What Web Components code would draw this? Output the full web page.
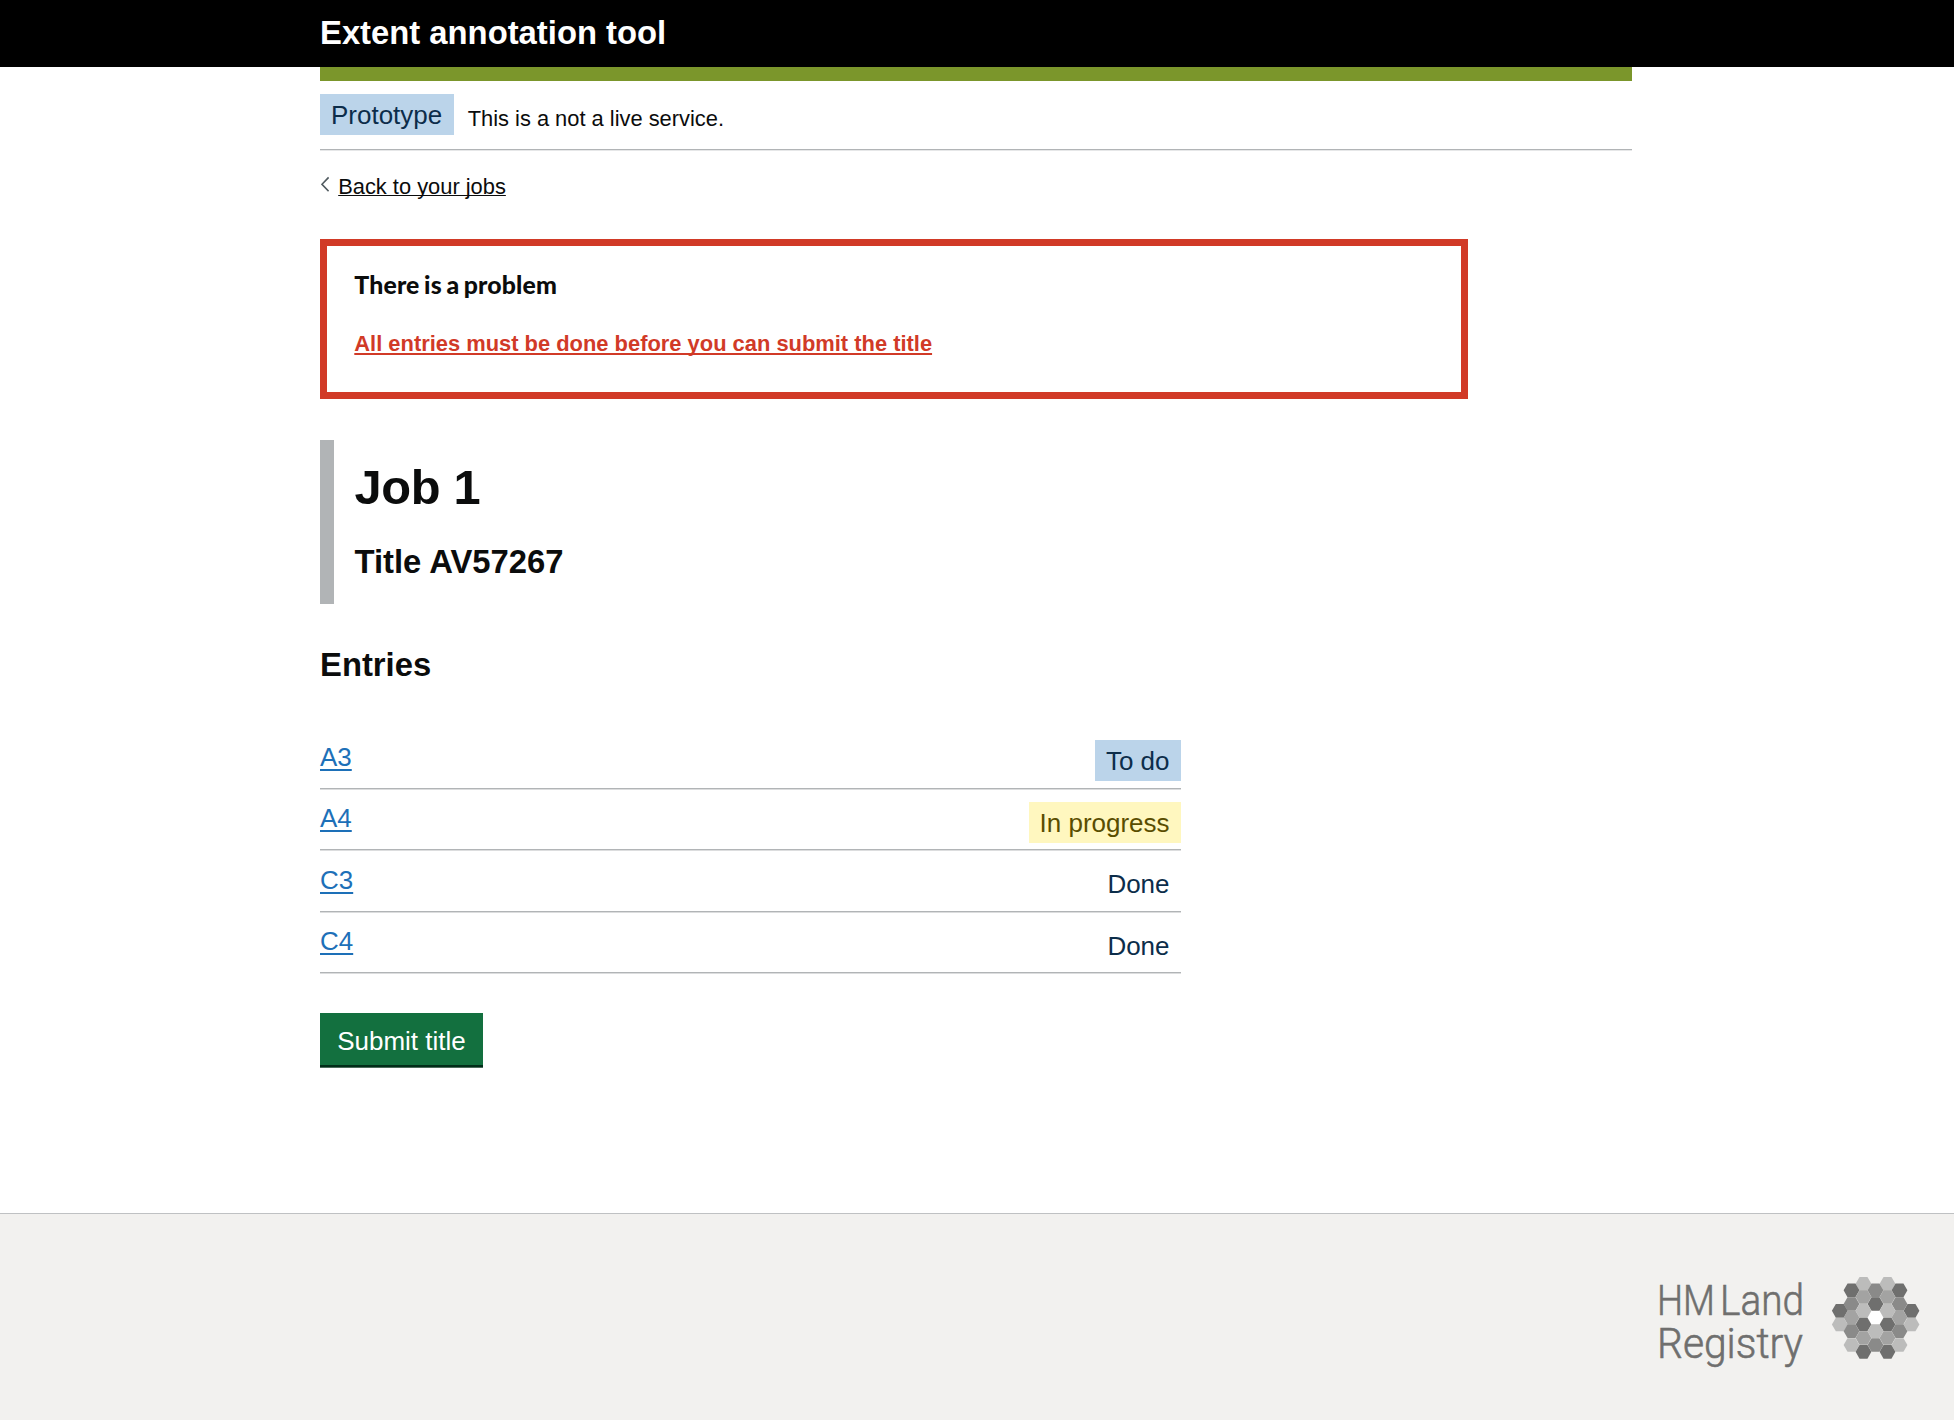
<!DOCTYPE html>
<html lang="en">
<head>
<meta charset="utf-8">
<title>Extent annotation tool</title>
<style>
html,body{margin:0;padding:0;background:#fff}
body{font-family:"Liberation Sans",Arial,sans-serif;color:#0b0c0c;-webkit-font-smoothing:antialiased}
</style>
</head>
<body>
<job-page></job-page>
<script>
function define(name, html){
  const t=document.createElement('template');
  t.innerHTML=html;
  customElements.define(name, class extends HTMLElement{
    constructor(){super();this.attachShadow({mode:'open'}).appendChild(t.content.cloneNode(true));}
  });
}

define('app-header', `<style>
:host{display:block;background:#000;height:67px;color:#fff}
div{padding-left:320px;padding-top:14px;font-size:32.8px;line-height:38px;font-weight:700}
</style><div><slot></slot></div>`);

define('status-tag', `<style>
:host{display:inline-block;box-sizing:border-box;height:41px;padding:0 11.5px 0 11px;font-size:25.97px;line-height:42px;background:#bbd4ea;color:#0c2d4a;white-space:nowrap}
:host([kind=progress]){background:#fff7bf;color:#594d00}
:host([kind=done]){background:transparent}
</style><slot></slot>`);

define('phase-banner', `<style>
:host{display:flex;box-sizing:border-box;height:69.5px;padding-top:13.5px;border-bottom:1px solid #b1b4b6;box-shadow:0 1px 0 #e6e7e8;align-items:flex-start;gap:14px}
span{font-size:21.87px;line-height:28px;padding-top:10.5px}
</style><status-tag>Prototype</status-tag><span><slot></slot></span>`);

define('back-link', `<style>
:host{display:flex;align-items:flex-start;margin-top:23px;height:28px}
svg{display:block;width:8px;height:16px;margin:3px 9.7px 0 .5px}
a{font-size:21.87px;line-height:28px;color:#0b0c0c;text-decoration:underline;text-decoration-thickness:1.4px;text-underline-offset:1.2px;text-decoration-skip-ink:none}
</style><svg viewBox="0 0 8 16"><path d="M7.6 1.4 1 8.3l6.6 6.9" fill="none" stroke="#505a5f" stroke-width="1.6"/></svg><a><slot></slot></a>`);

define('error-summary', `<style>
:host{display:block;box-sizing:border-box;width:1148px;height:160px;margin-top:38px;border:7px solid #d13a27;padding:23px 27.3px}
h2{margin:0;font:900 24.8px/32px Lato,sans-serif;letter-spacing:.16px;word-spacing:-1.5px}
a{display:block;width:max-content;margin-top:28.5px;font-size:21.9px;line-height:28px;font-weight:700;color:#d13a27;text-decoration:underline;text-decoration-thickness:1.5px;text-underline-offset:1.6px;text-decoration-skip-ink:none}
</style><h2><slot name="heading"></slot></h2><a><slot></slot></a>`);

define('job-title', `<style>
:host{display:block;box-sizing:border-box;height:164px;margin-top:41px;border-left:14px solid #b1b4b6;padding:19.5px 0 0 20.5px}
h1{margin:0;font-size:48.8px;line-height:54px;letter-spacing:-.3px}
h2{margin:28.5px 0 0;font-size:32.8px;line-height:40px}
</style><h1><slot name="job"></slot></h1><h2><slot></slot></h2>`);

define('entry-row', `<style>
:host{display:flex;box-sizing:border-box;height:61.5px;justify-content:space-between;align-items:flex-start;border-bottom:1px solid #b1b4b6;box-shadow:0 1px 0 #dcddde;padding-top:13px}
a{font-size:25.97px;line-height:34px;margin-top:-.5px;color:#1d70b8;text-decoration:underline;text-decoration-thickness:2px;text-underline-offset:3px}
</style><a><slot></slot></a><slot name="status"></slot>`);

define('entry-list', `<style>
:host{display:block;width:861px;margin-top:40.5px}
h2{margin:0 0 42.6px;font-size:32.8px;line-height:40px}
</style><h2><slot name="heading"></slot></h2><slot></slot>`);

define('submit-button', `<style>
:host{display:block;margin-top:40px}
button{display:block;box-sizing:border-box;width:163px;height:52px;border:0;padding:2px 0 0;margin:0;background:#13703f;color:#fff;font:25.97px/52px "Liberation Sans",Arial,sans-serif;box-shadow:0 2.7px 0 #002d18}
</style><button><slot></slot></button>`);

define('registry-logo', `<style>
:host{display:flex;align-items:flex-start}
svg{display:block;overflow:visible}
text{font-family:Roboto,sans-serif;font-weight:300;font-size:43.4px;fill:#6f6f6e;stroke:#6f6f6e;stroke-width:.6}
.mark{margin-left:27px;margin-top:-3px}
</style>
<svg width="145" height="92" viewBox="0 0 145 92"><text x="-3" y="35.5" textLength="58" lengthAdjust="spacingAndGlyphs">HM</text><text x="60" y="35.5" textLength="84" lengthAdjust="spacingAndGlyphs">Land</text><text x="-3" y="78.5" textLength="146" lengthAdjust="spacingAndGlyphs">Registry</text></svg>
<svg class="mark" width="88" height="84" viewBox="0 0 88 84"></svg>`);
/* The mark is a ring of hexagons; each entry is centre x, centre y, tone. */
const HEX=[[31.5,7.8,1],[55.5,7.8,1],[19.5,14.3,4],[43.5,14.3,3],[67.5,14.3,4],[31.5,21,2],[55.5,21,2],[19.5,28,3],[43.5,28,4],[67.5,28,3],[7.8,34.8,4],[31.5,34.8,1],[55.5,34.8,1],[79.5,34.8,4],[19.5,41.5,2],[67.5,41.5,2],[7.8,48.5,1],[31.5,48.5,4],[55.5,48.5,4],[79.5,48.5,1],[19.5,55.2,3],[43.5,55.2,1],[67.5,55.2,3],[31.5,62,2],[55.5,62,2],[19.5,69,1],[43.5,69,3],[67.5,69,1],[31.5,75.8,4],[55.5,75.8,4]];
const TONE=[,'#bcbcbb','#a3a3a2','#8a8a89','#6f6f6e'];
const Base=customElements.get('registry-logo');
customElements.define('registry-brand', class extends Base{
  constructor(){
    super();
    const mark=this.shadowRoot.querySelector('.mark');
    mark.innerHTML='<path fill="#fff" d="M35.6 41.5l3.95-6.85h7.9l3.95 6.85l-3.95 6.85h-7.9z"/>'+HEX.map(([x,y,t])=>
      `<path fill="${TONE[t]}" d="M${x-7.9} ${y}l3.95-6.85h7.9l3.95 6.85l-3.95 6.85h-7.9z"/>`).join('');
  }
});

define('app-footer', `<style>
:host{display:flex;box-sizing:border-box;height:207px;border-top:1px solid #bfc1c3;background:#f2f1ef;justify-content:flex-end;align-items:flex-start;padding:65px 34px 0 0}
</style><registry-brand></registry-brand>`);

define('job-page', `<style>
:host{display:flex;flex-direction:column;height:1420px;overflow:hidden}
main{width:1312px;margin-left:320px}
.rule{height:13.5px;background:#7b962b}
app-footer{margin-top:auto}
</style>
<app-header>Extent annotation tool</app-header>
<main>
<div class="rule"></div>
<phase-banner>This is a not a live service.</phase-banner>
<back-link>Back to your jobs</back-link>
<error-summary><span slot="heading">There is a problem</span>All entries must be done before you can submit the title</error-summary>
<job-title><span slot="job">Job 1</span>Title AV57267</job-title>
<entry-list><span slot="heading">Entries</span>
<entry-row>A3<status-tag slot="status">To do</status-tag></entry-row>
<entry-row>A4<status-tag slot="status" kind="progress">In progress</status-tag></entry-row>
<entry-row>C3<status-tag slot="status" kind="done">Done</status-tag></entry-row>
<entry-row>C4<status-tag slot="status" kind="done">Done</status-tag></entry-row>
</entry-list>
<submit-button>Submit title</submit-button>
</main>
<app-footer></app-footer>`);
</script>
</body>
</html>
